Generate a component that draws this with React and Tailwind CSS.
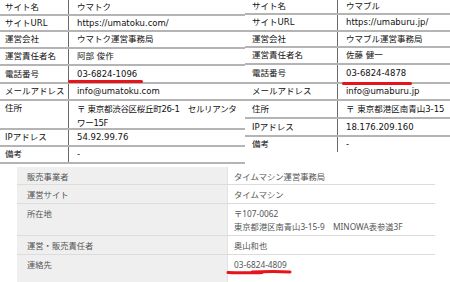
import React from "react";

const topFont = { fontFamily: '"DejaVu Sans", "Noto Sans CJK JP", sans-serif' };
const botFont = { fontFamily: '"Noto Sans", "Noto Sans CJK JP", sans-serif' };

const leftRows = [
  { h: "h-[16px]", label: "サイト名", value: "ウマトク" },
  { h: "h-[16px]", label: "サイトURL", value: "https://umatoku.com/" },
  { h: "h-[17px]", label: "運営会社", value: "ウマトク運営事務局" },
  { h: "h-[17px]", label: "運営責任者名", value: "阿部 俊作" },
  { h: "h-[18px]", label: "電話番号", value: "03-6824-1096" },
  { h: "h-[17px]", label: "メールアドレス", value: "info@umatoku.com" },
  { h: "h-[29px]", label: "住所", value: ["〒 東京都渋谷区桜丘町26-1　セルリアンタ", "ワー15F"], top: true },
  { h: "h-[17px]", label: "IPアドレス", value: "54.92.99.76" },
  { h: "h-[17px]", label: "備考", value: "-" },
];

const rightRows = [
  { h: "h-[15px]", label: "サイト名", value: "ウマブル" },
  { h: "h-[17px]", label: "サイトURL", value: "https://umaburu.jp/" },
  { h: "h-[16px]", label: "運営会社", value: "ウマブル運営事務局" },
  { h: "h-[17px]", label: "運営責任者名", value: "佐藤 健一" },
  { h: "h-[19px]", label: "電話番号", value: "03-6824-4878" },
  { h: "h-[17px]", label: "メールアドレス", value: "info@umaburu.jp" },
  { h: "h-[18px]", label: "住所", value: "〒 東京都港区南青山3-15" },
  { h: "h-[18px]", label: "IPアドレス", value: "18.176.209.160" },
  { h: "h-[15px]", label: "備考", value: "-", last: true },
];

function TopRow({ row, labelW, labelPad, valuePad }) {
  return (
    <div className={`flex ${row.h} ${row.last ? "" : "border-b-2 border-[#b4b4b4]"}`}>
      <div
        className={`${labelW} ${labelPad} shrink-0 border-r border-[#6a6a6a] flex ${row.top ? "items-start pt-[1px]" : "items-center"} whitespace-nowrap overflow-hidden`}
      >
        {row.label}
      </div>
      <div
        className={`flex-1 ${valuePad} flex ${row.top ? "flex-col items-start pt-[1px] leading-[14px] tracking-[-0.3px]" : "items-center"} whitespace-nowrap overflow-hidden`}
      >
        {Array.isArray(row.value) ? row.value.map((v, i) => <div key={i}>{v}</div>) : row.value}
      </div>
    </div>
  );
}

const botRows = [
  { h: "h-[18px]", label: "販売事業者", value: ["タイムマシン運営事務局"] },
  { h: "h-[19px]", label: "運営サイト", value: ["タイムマシン"] },
  { h: "h-[32px]", label: "所在地", value: ["〒107-0062", "東京都港区南青山3-15-9　MINOWA表参道3F"] },
  { h: "h-[19px]", label: "運営・販売責任者", value: ["奥山和也"] },
  { h: "h-[30px]", label: "連絡先", value: ["03-6824-4809"], last: true },
];

export default function App() {
  return (
    <div className="w-[450px] h-[282px] bg-white overflow-hidden relative">
      <div className="flex text-[8.5px] text-[#111]" style={topFont}>
        <div className="w-[245px] shrink-0">
          {leftRows.map((r, i) => (
            <TopRow key={i} row={r} labelW="w-[69px]" labelPad="pl-[5px]" valuePad="pl-[8px]" />
          ))}
        </div>
        <div className="flex-1">
          {rightRows.map((r, i) => (
            <TopRow key={i} row={r} labelW="w-[93px]" labelPad="pl-[7px]" valuePad="pl-[8px]" />
          ))}
        </div>
      </div>

      <div className="ml-[17px] mt-[3px] w-[418px] text-[8.3px] text-[#555]" style={botFont}>
        {botRows.map((r, i) => (
          <div key={i} className={`flex ${r.h} ${r.last ? "" : "border-b border-[#dcdcdc]"}`}>
            <div className="w-[210px] shrink-0 bg-[#efefef] pl-[10px] pt-[3px] leading-[13px]">{r.label}</div>
            <div className="flex-1 border-l border-[#e2e2e2] pl-[6px] pt-[3px] leading-[13px]">
              {r.value.map((v, j) => (
                <div key={j}>{v}</div>
              ))}
            </div>
          </div>
        ))}
      </div>

      {/* red underlines */}
      <div className="absolute left-[68px] top-[80px] w-[75px] h-[3px] rounded-full bg-[#e8141c]" />
      <div className="absolute left-[342px] top-[82px] w-[70px] h-[3px] rounded-full bg-[#e8141c]" />
      <svg className="absolute left-[226px] top-[268px]" width="68" height="8" viewBox="0 0 68 8">
        <path d="M2 4.5 C20 5, 30 5, 36 4.5 M26 4 C40 3.5, 55 3.5, 64 4" stroke="#e8141c" strokeWidth="3" strokeLinecap="round" fill="none" />
      </svg>
    </div>
  );
}
